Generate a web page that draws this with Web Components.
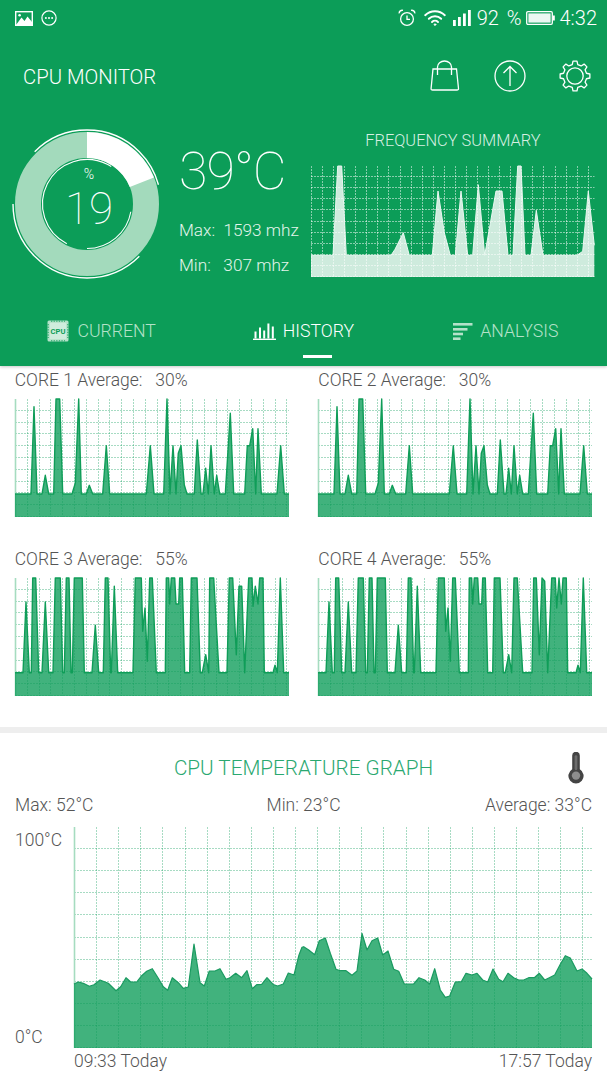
<!DOCTYPE html>
<html>
<head>
<meta charset="utf-8">
<title>CPU Monitor</title>
<style>
  html, body { margin: 0; padding: 0; background: #fff; }
  body { width: 607px; height: 1080px; overflow: hidden; font-family: Roboto, "Liberation Sans", sans-serif; }
  app-header { position: relative; z-index: 1; }
</style>
</head>
<body>
<app-header>
  <status-bar></status-bar>
  <app-toolbar>CPU MONITOR</app-toolbar>
  <summary-row></summary-row>
  <tab-bar></tab-bar>
</app-header>
<core-grid>
  <core-card series="core1">CORE 1 Average:   30%</core-card>
  <core-card series="core1">CORE 2 Average:   30%</core-card>
  <core-card series="core3">CORE 3 Average:   55%</core-card>
  <core-card series="core4">CORE 4 Average:   55%</core-card>
</core-grid>
<temp-card></temp-card>

<script>
// chart samples are measured at 3x, in the coordinates given by x0/y0 of each chart
const FREQ = '20,390 86,390 100,122 112,122 126,390 260,390 272,372 297,322 315,390 384,390 401,197 420,322 438,390 453,390 470,197 490,390 505,390 522,178 541,390 575,197 593,197 611,390 626,390 640,122 650,122 662,390 680,390 696,255 716,390 818,390 835,378 852,197 870,360';
const CORE1 = '44,372 92,372 101,110 110,372 125,372 135,316 145,372 160,372 167,87 178,87 187,372 215,372 225,340 235,87 243,372 258,372 267,346 277,372 307,372 318,227 328,372 438,372 450,227 461,372 490,372 500,87 509,372 518,227 527,372 534,250 542,227 552,345 560,372 582,372 591,210 602,372 608,372 616,295 624,372 632,227 642,372 649,316 658,372 675,372 690,130 700,372 733,372 741,227 748,227 757,176 766,372 773,176 783,372 830,372 841,227 852,372 866,372';
const CORE3 = '44,384 68,384 77,172 87,384 93,384 97,100 106,100 115,384 125,384 135,172 145,384 158,384 165,100 180,100 187,384 192,384 198,100 206,100 212,384 216,384 222,100 246,100 252,384 275,384 285,242 295,384 309,384 315,100 323,100 331,384 333,384 342,125 352,384 398,384 405,100 423,100 427,260 434,190 441,350 448,100 456,100 468,384 495,384 498,100 505,100 508,178 513,100 523,100 527,178 535,178 538,100 546,100 553,384 568,384 573,100 590,100 600,384 606,384 616,330 625,384 628,100 640,100 656,384 680,384 687,100 697,100 708,330 716,125 724,125 733,384 745,100 755,100 758,185 765,125 773,178 778,100 788,100 792,384 818,384 824,362 831,384 840,100 850,384 866,384';
const CORE4 = '44,384 68,384 77,172 87,384 93,384 97,100 106,100 115,384 125,384 135,172 145,384 158,384 165,100 180,100 187,384 192,384 198,100 206,100 212,384 216,384 222,100 246,100 252,384 275,384 285,242 295,384 309,384 315,100 323,100 331,384 333,384 342,125 352,384 398,384 405,100 423,100 427,260 434,190 441,350 448,100 456,100 468,384 495,384 498,100 505,100 508,178 513,100 523,100 527,178 535,178 538,100 546,100 553,384 568,384 573,100 590,100 600,384 606,384 616,330 625,384 632,100 642,100 658,384 686,384 691,100 699,100 708,330 716,100 724,110 733,384 745,100 756,100 760,190 767,100 774,178 779,100 789,100 793,384 818,384 824,362 831,384 840,100 850,384 866,384';
const TEMP_A = '222,222 235,216 250,220 268,229 282,224 300,210 325,220 348,242 362,230 378,203 392,216 410,216 425,197 440,184 457,176 475,205 490,230 503,241 517,203 535,218 550,235 565,231 582,102 600,218 613,228 628,183 645,183 660,176 678,208 690,203 707,190 725,203 741,182 757,236 770,224 785,223 801,203 820,224 833,228 850,222 865,189 882,195 897,135 906,112';
const TEMP_B = '5,110 20,120 38,134 52,92 70,84 85,130 102,178 115,182 132,182 150,196 165,183 180,70 195,120 210,92 227,84 242,135 258,123 275,178 290,184 307,222 335,222 351,203 368,210 383,222 398,176 415,240 430,262 443,258 460,216 478,215 492,190 510,195 525,190 542,210 557,216 573,177 590,208 603,215 618,190 635,203 650,210 665,210 680,203 697,203 712,190 728,210 742,203 758,195 775,163 790,137 805,144 825,183 840,177 855,190 870,207';
const TEMP = TEMP_A + ' ' + TEMP_B.split(' ').map(p => { const [x, y] = p.split(','); return (+x + 906) + ',' + y; }).join(' ');
const SERIES = { freq: FREQ, core1: CORE1, core3: CORE3, core4: CORE4, temp: TEMP };

class LineChart extends HTMLElement {
  connectedCallback() {
    this.attachShadow({ mode: 'open' });
    const n = name => parseFloat(this.getAttribute(name));
    const w = n('w'), h = n('h'), dx = n('dx'), dy = n('dy'), x0 = n('x0'), y0 = n('y0');
    const pts = SERIES[this.getAttribute('series')].split(' ').map(p => {
      const [x, y] = p.split(',');
      return [((x - x0) / 3).toFixed(1), ((y - y0) / 3).toFixed(1)];
    });
    let grid = '';
    for (let x = 0; x < w; x += dx) {
      const gx = Math.round(x) + 0.5;
      grid += `<line x1="${gx}" x2="${gx}" y1="0" y2="${h}"/>`;
    }
    for (let y = dy; y <= h + 1; y += dy) {
      const gy = Math.round(y) - 0.5;
      grid += `<line x1="0" x2="${w}" y1="${gy}" y2="${gy}"/>`;
    }
    const top = pts.map(p => p.join(',')).join(' ');
    const area = `0,${h} ${top} ${pts[pts.length - 1][0]},${h}`;
    this.shadowRoot.innerHTML = `
      <style>
        :host { display: block; width: ${w}px; height: ${h}px; }
        svg { display: block; overflow: visible; }
        .grid line { stroke: var(--grid); stroke-width: 1; stroke-dasharray: 2 1; }
        .axis { stroke: var(--axis, transparent); stroke-width: 1.6; }
        .area { fill: var(--fill); }
        .top { fill: none; stroke: var(--line); stroke-width: var(--line-w, 1.3); stroke-linejoin: round; }
      </style>
      <svg width="${w}" height="${h}" viewBox="0 0 ${w} ${h}">
        <g class="grid">${grid}</g>
        <line class="axis" x1="0.5" x2="0.5" y1="0" y2="${h}"/>
        <polygon class="area" points="${area}"/>
        <polyline class="top" points="${top}"/>
      </svg>`;
  }
}

class AppHeader extends HTMLElement {
  constructor() {
    super();
    this.attachShadow({ mode: 'open' }).innerHTML = `
      <style>
        :host {
          display: flex; flex-direction: column; height: 366px; background: #0c9d58; color: #fff;
          box-shadow: 0 1px 3px rgba(0,0,0,.22);
        }
      </style>
      <slot></slot>`;
  }
}

class StatusBar extends HTMLElement {
  constructor() {
    super();
    this.attachShadow({ mode: 'open' }).innerHTML = `
      <style>
        :host { display: flex; align-items: center; height: 36px; padding: 0 10px 0 15px; font: 300 20px/36px Roboto, sans-serif; color: #fff; }
        svg { display: block; }
        .left { display: flex; align-items: center; gap: 8px; }
        .right { display: flex; align-items: center; margin-left: auto; }
        .pct { margin: 0 4px 0 6px; white-space: pre; word-spacing: 3px; }
        .time { margin-left: 5px; }
      </style>
      <div class="left">
        <svg width="18" height="15" viewBox="0 0 18 15">
          <rect x=".7" y=".7" width="16.6" height="13.6" fill="none" stroke="#fff" stroke-width="1.4"/>
          <circle cx="4.6" cy="4.2" r="1.3" fill="#fff"/>
          <path d="M1 14 L6.5 6.5 L9.5 10 L12.5 5.5 L17 11 V14 Z" fill="#fff"/>
        </svg>
        <svg width="16" height="16" viewBox="0 0 16 16">
          <circle cx="8" cy="8" r="7.1" fill="none" stroke="#fff" stroke-width="1.2"/>
          <circle cx="4.9" cy="8" r="1" fill="#fff"/><circle cx="8" cy="8" r="1" fill="#fff"/><circle cx="11.1" cy="8" r="1" fill="#fff"/>
        </svg>
      </div>
      <div class="right">
        <svg width="18" height="18" viewBox="0 0 18 18" fill="none" stroke="#fff" stroke-width="1.3" style="margin-right:8px">
          <circle cx="9" cy="10" r="6.4"/>
          <path d="M9 6.4 V10.4 H12"/>
          <path d="M1.2 4.4 A3 3 0 0 1 5 1.4 M16.8 4.4 A3 3 0 0 0 13 1.4" stroke-width="1.5"/>
        </svg>
        <svg width="22" height="16" viewBox="0 0 22 16" fill="none" stroke="#fff" stroke-width="1.9" stroke-linecap="round" style="margin-right:7px">
          <path d="M1.2 5.2 A14 14 0 0 1 20.8 5.2"/>
          <path d="M4.8 8.8 A9 9 0 0 1 17.2 8.8"/>
          <path d="M8 12 A4.4 4.4 0 0 1 14 12"/>
          <circle cx="11" cy="14.6" r=".8" fill="#fff" stroke-width="1"/>
        </svg>
        <svg width="18" height="16" viewBox="0 0 18 16" fill="#fff">
          <rect x="0" y="10" width="2.8" height="6"/><rect x="5" y="7" width="2.8" height="9"/>
          <rect x="10" y="3.5" width="2.8" height="12.5"/><rect x="15" y="0" width="2.8" height="16"/>
        </svg>
        <span class="pct">92 %</span>
        <svg width="29" height="14" viewBox="0 0 29 14">
          <rect x=".7" y=".7" width="25.6" height="12.6" rx="1.2" fill="none" stroke="#fff" stroke-width="1.3"/>
          <rect x="2.4" y="2.4" width="22.2" height="9.2" fill="#fff" opacity=".92"/>
          <rect x="27" y="4.5" width="1.8" height="5" fill="#fff"/>
        </svg>
        <span class="time">4:32</span>
      </div>`;
  }
}

function gearPath(cx, cy, rOut, rIn, teeth) {
  const step = 360 / teeth;
  let d = '';
  for (let i = 0; i < teeth; i++) {
    const a = i * step - 90;
    const pts = [[rIn, a - step * .30], [rOut, a - step * .17], [rOut, a + step * .17], [rIn, a + step * .30]];
    pts.forEach(([r, deg]) => {
      const t = deg * Math.PI / 180;
      d += (d ? 'L' : 'M') + (cx + r * Math.cos(t)).toFixed(2) + ' ' + (cy + r * Math.sin(t)).toFixed(2) + ' ';
    });
  }
  return d + 'Z';
}

class AppToolbar extends HTMLElement {
  constructor() {
    super();
    this.attachShadow({ mode: 'open' }).innerHTML = `
      <style>
        :host { display: flex; align-items: center; height: 80px; padding: 0 16px 0 23px; font: 300 20.3px Roboto, sans-serif; color: #fff; }
        .label { padding-top: 2px; }
        .icons { display: flex; align-items: center; margin-left: auto; gap: 33.5px; }
        svg { display: block; fill: none; stroke: #fff; stroke-width: 1.3; }
      </style>
      <div class="label"><slot></slot></div>
      <div class="icons">
        <svg width="30" height="32" viewBox="0 0 30 32">
          <path d="M3 9 H26.5 L28.5 28.5 Q28.6 30 27 30 H2.5 Q1 30 1.1 28.5 Z"/>
          <path d="M7.5 15 V7 A7 6 0 0 1 21.5 7 V15"/>
        </svg>
        <svg width="32" height="32" viewBox="0 0 32 32">
          <circle cx="16" cy="16" r="15"/>
          <path d="M16 26 V6.5 M9.5 13 L16 6.5 L22.5 13"/>
        </svg>
        <svg width="32" height="32" viewBox="0 0 32 32" stroke-linejoin="round">
          <path d="${gearPath(16, 16, 15, 11.8, 8)}"/>
          <circle cx="16" cy="16" r="8.2"/>
        </svg>
      </div>`;
  }
}

class CpuGauge extends HTMLElement {
  constructor() {
    super();
    const arc = (r, from, to, w) =>
      `<circle cx="75" cy="75" r="${r}" fill="none" stroke="#fff" stroke-width="${w}" pathLength="360"
        stroke-dasharray="${to - from} 360" transform="rotate(${from - 90} 75 75)"/>`;
    this.attachShadow({ mode: 'open' }).innerHTML = `
      <style>
        :host { display: block; position: relative; width: 150px; height: 150px; color: #fff; flex: none; }
        svg { display: block; }
        .pct, .val { position: absolute; left: 2px; width: 150px; text-align: center; }
        .pct { top: 37px; font: 300 14px/16px Roboto, sans-serif; }
        .val { top: 58px; font: 100 44px/44px Roboto, sans-serif; }
      </style>
      <svg width="150" height="150" viewBox="0 0 150 150">
        <circle cx="75" cy="75" r="59" fill="none" stroke="#a3dabc" stroke-width="26"/>
        <circle cx="75" cy="75" r="59" fill="none" stroke="#fff" stroke-width="26" pathLength="100"
          stroke-dasharray="19 100" transform="rotate(-90 75 75)"/>
        ${arc(74, -45, 75, 1.4)}
        ${arc(74, 135, 270, 1.4)}
        ${arc(44.5, 207, 393, 1.1)}
        ${arc(44.5, 100, 180, 1.1)}
      </svg>
      <div class="pct">%</div>
      <div class="val">19</div>`;
  }
}

class SummaryRow extends HTMLElement {
  constructor() {
    super();
    this.attachShadow({ mode: 'open' }).innerHTML = `
      <style>
        :host { display: flex; height: 178px; padding: 13px 0 0 12px; box-sizing: border-box; color: #fff; }
        .stats { width: 132px; margin-left: 17px; padding-top: 15px; flex: none; }
        .temp { font: 100 52px/56px Roboto, sans-serif; letter-spacing: -1px; margin-bottom: 13px; white-space: nowrap; }
        .stat { font: 300 17.2px/35px Roboto, sans-serif; white-space: pre; color: #e4f5ec; }
        .freq { width: 284px; flex: none; margin-top: 2px; }
        .title { font: 300 16.4px/20px Roboto, sans-serif; text-align: center; color: #d6efe2; margin-bottom: 15px; white-space: nowrap; }
        line-chart {
          --grid: rgba(255,255,255,.5); --fill: rgba(255,255,255,.8); --line: #e9f7f0; --line-w: 1;
        }
      </style>
      <cpu-gauge></cpu-gauge>
      <div class="stats">
        <div class="temp">39°C</div>
        <div class="stat">Max:  1593 mhz</div>
        <div class="stat">Min:   307 mhz</div>
      </div>
      <div class="freq">
        <div class="title">FREQUENCY SUMMARY</div>
        <line-chart series="freq" w="283.5" h="111" dx="11.07" dy="11.1" x0="20" y0="122"></line-chart>
      </div>`;
  }
}

class TabBar extends HTMLElement {
  constructor() {
    super();
    this.attachShadow({ mode: 'open' }).innerHTML = `
      <style>
        :host { display: grid; grid-template-columns: repeat(3, 1fr); height: 72px; font: 300 17.7px Roboto, sans-serif; color: #b4e2c9; }
        .tab { position: relative; display: flex; align-items: center; justify-content: center; gap: 7px; box-sizing: border-box; height: 72px; padding-top: 2px; }
        .on { color: #fff; }
        .on::after { content: ""; position: absolute; left: 50%; bottom: 8px; width: 29px; height: 3px; background: #fff; }
        svg { display: block; }
      </style>
      <div class="tab">
        <svg width="24" height="24" viewBox="0 0 24 24">
          <rect x="1.5" y="1.5" width="21" height="21" rx="1.5" fill="#b4e2c9"/>
          <rect x="3.8" y="3.8" width="16.4" height="16.4" fill="#cfeddd"/>
          <path d="M5 2.2 H19 M5 21.8 H19 M2.2 5 V19 M21.8 5 V19" stroke="#0c9d58" stroke-width=".9" stroke-dasharray="1.3 1.3"/>
          <text x="12" y="14.8" text-anchor="middle" font-family="Roboto, sans-serif" font-size="7.6" font-weight="700" fill="#0c9d58">CPU</text>
        </svg>
        <span>CURRENT</span>
      </div>
      <div class="tab on">
        <svg width="23" height="17" viewBox="0 0 23 17" fill="#fff">
          <rect x="0" y="15.6" width="23" height="1.4"/>
          <rect x="1.5" y="8.5" width="2" height="7"/><rect x="6" y="4.5" width="2" height="11"/>
          <rect x="10.2" y="7.5" width="2" height="8"/><rect x="14.4" y="0.5" width="2" height="15"/>
          <rect x="18.8" y="3.5" width="2" height="12"/>
        </svg>
        <span>HISTORY</span>
      </div>
      <div class="tab">
        <svg width="20" height="17" viewBox="0 0 20 17" fill="#b4e2c9">
          <rect x="0" y="0" width="19.5" height="2.6"/><rect x="0" y="5" width="14.5" height="2.6"/>
          <rect x="0" y="9.7" width="10" height="2.6"/><rect x="0" y="14.4" width="7.5" height="2.6"/>
        </svg>
        <span>ANALYSIS</span>
      </div>`;
  }
}

class CoreGrid extends HTMLElement {
  constructor() {
    super();
    this.attachShadow({ mode: 'open' }).innerHTML = `
      <style>
        :host { display: grid; grid-template-columns: 303.6px 1fr; grid-template-rows: 151px 151px; row-gap: 28.3px; padding: 0 0 0 14.7px; height: 361px; box-sizing: border-box; }
      </style>
      <slot></slot>`;
  }
}

class CoreCard extends HTMLElement {
  constructor() {
    super();
    const upper = this.getAttribute('series') !== 'core1';
    this.attachShadow({ mode: 'open' }).innerHTML = `
      <style>
        :host { display: block; font: 300 17.5px/28px Roboto, sans-serif; color: #555; }
        .label { height: 33px; white-space: pre; }
        line-chart {
          --grid: rgba(12,156,88,.36); --fill: rgba(12,156,88,.78); --line: #0f9d58; --axis: #a6dcc0; --line-w: 1.4;
        }
      </style>
      <div class="label"><slot></slot></div>
      <line-chart series="${this.getAttribute('series')}" w="274" h="118" dx="11.8" dy="11.8" x0="44" y0="${upper ? 100 : 87}"></line-chart>`;
  }
}

class TempCard extends HTMLElement {
  constructor() {
    super();
    this.attachShadow({ mode: 'open' }).innerHTML = `
      <style>
        :host { display: block; border-top: 6px solid #eeeeee; height: 353px; box-sizing: border-box; font: 300 17.5px/22px Roboto, sans-serif; color: #555; padding-top: 19px; }
        .head { display: grid; grid-template-columns: 1fr auto 1fr; align-items: center; height: 28px; }
        .title { font: 300 20.7px/28px Roboto, sans-serif; color: #2aa870; white-space: nowrap; }
        .head svg { justify-self: end; margin-right: 23px; display: block; }
        .stats { display: grid; grid-template-columns: 1fr auto 1fr; margin: 14px 15px 11px; }
        .stats :last-child { text-align: right; }
        .plot { display: flex; }
        .axis { width: 74px; padding: 2px 0 0 15px; box-sizing: border-box; height: 221px; display: flex; flex-direction: column; justify-content: space-between; }
        .foot { display: flex; justify-content: space-between; margin: 2px 15px 0 74px; }
        line-chart {
          --grid: rgba(12,156,88,.36); --fill: rgba(12,156,88,.78); --line: #1a9a60; --axis: #a6dcc0; --line-w: 1.2;
        }
      </style>
      <div class="head">
        <span></span>
        <span class="title">CPU TEMPERATURE GRAPH</span>
        <svg width="16" height="32" viewBox="0 0 16 32">
          <path d="M4.2 3.6 A3.8 3.8 0 0 1 11.8 3.6 V17.2 A7.6 7.6 0 1 1 4.2 17.2 Z" fill="#444"/>
          <rect x="6.6" y="3.2" width="2.8" height="15" rx="1.4" fill="#6d6d6d"/>
          <circle cx="8" cy="23.6" r="4.2" fill="#8d8d8d"/>
        </svg>
      </div>
      <div class="stats"><span>Max: 52°C</span><span>Min: 23°C</span><span>Average: 33°C</span></div>
      <div class="plot">
        <div class="axis"><span>100°C</span><span>0°C</span></div>
        <line-chart series="temp" w="518" h="221" dx="22.1" dy="22.1" x0="222" y0="-249"></line-chart>
      </div>
      <div class="foot"><span>09:33 Today</span><span>17:57 Today</span></div>`;
  }
}

customElements.define('line-chart', LineChart);
customElements.define('app-header', AppHeader);
customElements.define('status-bar', StatusBar);
customElements.define('app-toolbar', AppToolbar);
customElements.define('cpu-gauge', CpuGauge);
customElements.define('summary-row', SummaryRow);
customElements.define('tab-bar', TabBar);
customElements.define('core-grid', CoreGrid);
customElements.define('core-card', CoreCard);
customElements.define('temp-card', TempCard);
</script>
</body>
</html>
